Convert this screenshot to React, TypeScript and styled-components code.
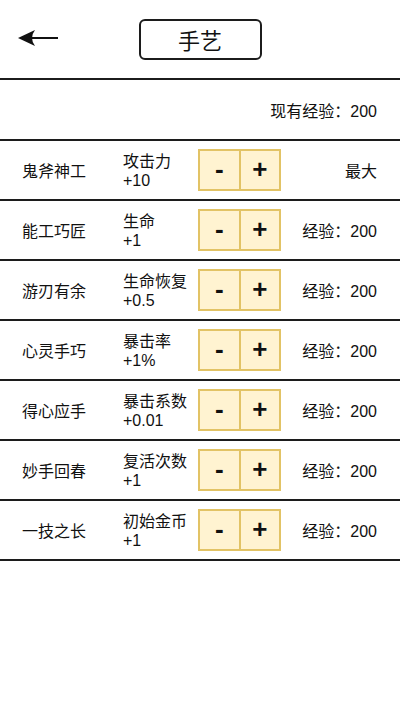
import React from "react";
import styled, { createGlobalStyle } from "styled-components";

const Global = createGlobalStyle`
  html, body { margin: 0; padding: 0; background: #fff; }
  body { font-family: "Liberation Sans", "Noto Sans CJK SC", sans-serif; color: #111; }
`;

const Page = styled.div`
  width: 400px;
  min-height: 724px;
  background: #fff;
`;

const Header = styled.div`
  height: 78px;
  display: grid;
  grid-template-columns: 1fr 123px 1fr;
  align-items: center;
  border-bottom: 2px solid #1c1c1c;
`;

const BackButton = styled.div`
  padding-left: 17px;
  display: flex;
  align-items: center;
  height: 100%;
  margin-top: -3px;
`;

const TitleBox = styled.div`
  height: 37px;
  border: 2px solid #1c1c1c;
  border-radius: 6px;
  display: flex;
  align-items: center;
  justify-content: center;
  font-size: 22px;
`;

const ExpBar = styled.div`
  height: 59px;
  display: flex;
  align-items: center;
  justify-content: flex-end;
  padding-right: 23px;
  font-size: 16px;
  border-bottom: 2px solid #1c1c1c;
`;

const Row = styled.div`
  height: 58px;
  display: grid;
  grid-template-columns: 101px 75px 83px 1fr;
  align-items: center;
  padding-left: 22px;
  padding-right: 23px;
  border-bottom: 2px solid #1c1c1c;
  font-size: 16px;
`;

const Name = styled.div`
  white-space: nowrap;
`;

const Stat = styled.div`
  line-height: 19px;
  white-space: nowrap;
  margin-top: 1px;
`;

const Stepper = styled.div`
  display: flex;
  height: 42px;
`;

const StepButton = styled.div<{ $first?: boolean }>`
  flex: 1;
  box-sizing: border-box;
  background: #fff3d1;
  border: 2px solid #e2c365;
  border-left-width: ${(p) => (p.$first ? "2px" : "0")};
  display: flex;
  align-items: center;
  justify-content: center;
  font-size: 26px;
  font-weight: bold;
  line-height: 1;
  padding-bottom: 2px;
`;

const Cost = styled.div`
  text-align: right;
  white-space: nowrap;
`;

const rows = [
  { name: "鬼斧神工", stat: "攻击力", val: "+10", cost: "最大" },
  { name: "能工巧匠", stat: "生命", val: "+1", cost: "经验：200" },
  { name: "游刃有余", stat: "生命恢复", val: "+0.5", cost: "经验：200" },
  { name: "心灵手巧", stat: "暴击率", val: "+1%", cost: "经验：200" },
  { name: "得心应手", stat: "暴击系数", val: "+0.01", cost: "经验：200" },
  { name: "妙手回春", stat: "复活次数", val: "+1", cost: "经验：200" },
  { name: "一技之长", stat: "初始金币", val: "+1", cost: "经验：200" },
];

const Arrow = () => (
  <svg width="42" height="20" viewBox="0 0 42 20">
    <path d="M14 9 L41 9 L41 11 L14 11 Z" fill="#111" />
    <path d="M1 10 L18 2 Q12 10 18 18 Z" fill="#111" />
  </svg>
);

export default function App() {
  return (
    <Page>
      <Global />
      <Header>
        <BackButton>
          <Arrow />
        </BackButton>
        <TitleBox>手艺</TitleBox>
        <div />
      </Header>
      <ExpBar>现有经验：200</ExpBar>
      {rows.map((r) => (
        <Row key={r.name}>
          <Name>{r.name}</Name>
          <Stat>
            {r.stat}
            <br />
            {r.val}
          </Stat>
          <Stepper>
            <StepButton $first>-</StepButton>
            <StepButton>+</StepButton>
          </Stepper>
          <Cost>{r.cost}</Cost>
        </Row>
      ))}
    </Page>
  );
}
